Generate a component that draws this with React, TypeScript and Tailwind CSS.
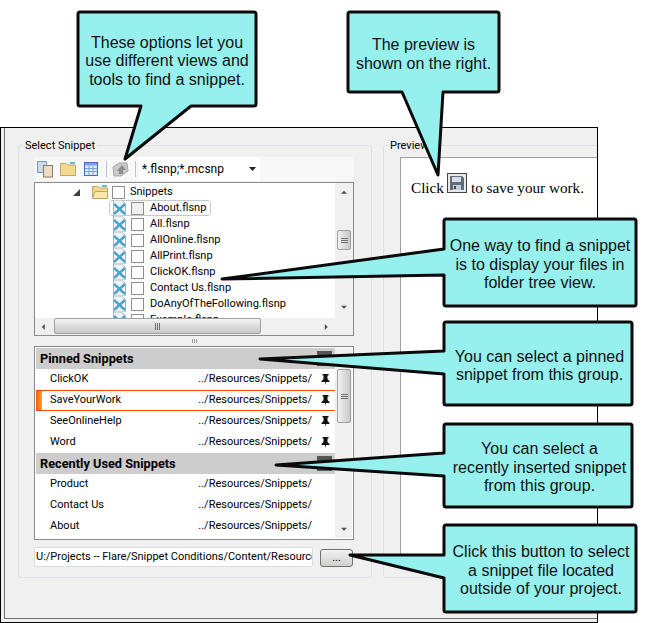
const uiFont = "font-['Roboto',sans-serif]";

const treeFiles = [
  "About.flsnp",
  "All.flsnp",
  "AllOnline.flsnp",
  "AllPrint.flsnp",
  "ClickOK.flsnp",
  "Contact Us.flsnp",
  "DoAnyOfTheFollowing.flsnp",
  "Example.flsnp",
];

const pinned = ["ClickOK", "SaveYourWork", "SeeOnlineHelp", "Word"];
const recent = ["Product", "Contact Us", "About"];

function CopyIcon() {
  return (
    <svg width="17" height="17" viewBox="0 0 17 17">
      <rect x="0.5" y="0.5" width="9" height="11" fill="#c9dbe8" stroke="#7f9bb0" />
      <rect x="6.5" y="4.5" width="9" height="11.5" fill="#ecdcc4" stroke="#8a7a66" />
    </svg>
  );
}

function FolderIcon({ open }: { open?: boolean }) {
  return (
    <svg width="16" height="14" viewBox="0 0 16 14">
      <path d="M0.5 3 V1.5 H6 L7.5 3 H15.5 V13.5 H0.5 Z" fill="#f3d88f" stroke="#c2a566" />
      {open && <path d="M0.5 13.5 L3 6.5 H15.5 V13.5 Z" fill="#fbe6ae" stroke="#c2a566" />}
      <rect x="10" y="0" width="5" height="2" fill="#5cc0c8" />
    </svg>
  );
}

function GridIcon() {
  return (
    <svg width="14" height="14" viewBox="0 0 14 14">
      <rect x="0.5" y="0.5" width="13" height="13" fill="#dfe8f8" stroke="#4a6cc0" />
      <rect x="1" y="1" width="12" height="2.5" fill="#7f9fe0" />
      <path d="M5 3.5 V13 M9 3.5 V13 M1 6.5 H13 M1 9.5 H13" stroke="#7f9fe0" />
    </svg>
  );
}

function DisabledIcon() {
  return (
    <svg width="17" height="15" viewBox="0 0 17 15">
      <path d="M1 5 L7 1 H15 L16 9 L9 14 H2 Z" fill="#c9c9c9" stroke="#a8a8a8" />
      <path d="M5 9 L10 3 L14 8 H11 V12 H7 V9 Z" fill="#8f8f8f" />
    </svg>
  );
}

function FileIcon() {
  return (
    <svg width="13" height="16" viewBox="0 0 13 16" className="shrink-0">
      <path d="M0.5 0 H8.5 L12.5 3.5 V16 H0.5 Z" fill="#eef4f6" stroke="#a9b8be" />
      <path d="M1 4 L12 14 M12 4 L1 14" stroke="#4aa3c8" strokeWidth="2.4" />
    </svg>
  );
}

function PinIcon() {
  return (
    <svg width="9" height="11" viewBox="0 0 9 11">
      <path d="M1.5 0 H7.5 V1.5 H6.5 V5 L8.5 7 V8 H5 L4.5 11 L4 8 H0.5 V7 L2.5 5 V1.5 H1.5 Z" fill="#111" />
    </svg>
  );
}

function Arrow({ dir }: { dir: "up" | "down" | "left" | "right" }) {
  const points = {
    up: "0,5 4,1 8,5",
    down: "0,1 8,1 4,5",
    left: "5,0 5,8 1,4",
    right: "1,0 1,8 5,4",
  }[dir];
  return (
    <svg width="8" height="8" viewBox="0 0 8 8" className={dir === "up" || dir === "down" ? "h-[6px]" : "w-[6px]"}>
      <polygon points={points} fill="#505050" />
    </svg>
  );
}

function VScrollbar({ thumbTop, thumbHeight, className }: { thumbTop: number; thumbHeight: number; className: string }) {
  return (
    <div className={"shrink-0 bg-[#f0f0f0] relative flex flex-col items-center justify-between " + className}>
      <Arrow dir="up" />
      <Arrow dir="down" />
      <div
        className="absolute left-[2px] w-[14px] rounded-[2px] border border-[#a0a0a0] bg-gradient-to-r from-[#f2f2f2] to-[#c8c8c8] flex flex-col items-center justify-center gap-[1px]"
        style={{ top: thumbTop, height: thumbHeight }}
      >
        <div className="w-[7px] h-px bg-[#707070]" />
        <div className="w-[7px] h-px bg-[#707070]" />
        <div className="w-[7px] h-px bg-[#707070]" />
      </div>
    </div>
  );
}

function GroupHeader({ label }: { label: string }) {
  return (
    <div className="h-[21px] bg-[#cdcdcd] flex items-center justify-between pl-[4px] pr-[3px] text-[12.75px] font-bold text-black">
      <span>{label}</span>
      <div className="w-[15px] h-[15px] bg-[#555]" />
    </div>
  );
}

function SnippetRow({ name, pin, selected }: { name: string; pin?: boolean; selected?: boolean }) {
  return (
    <div
      className={
        "h-[21px] flex items-center text-[11px] text-black relative " +
        (selected ? "border-y border-[#ff4a00]" : "")
      }
    >
      {selected && <div className="absolute left-0 top-0 bottom-0 w-[6px] bg-gradient-to-r from-[#ff5a00] to-[#ffa030]" />}
      <span className="pl-[14px] flex-1">{name}</span>
      <span>../Resources/Snippets/</span>
      <span className="w-[23px] flex justify-end pr-[5px]">{pin && <PinIcon />}</span>
    </div>
  );
}

function Callout({ className, lines }: { className: string; lines: string[] }) {
  return (
    <div className={"absolute pt-[5px] flex flex-col justify-center items-center text-center text-[16px] leading-[18.5px] text-[#111] font-['Liberation_Sans',sans-serif] " + className}>
      {lines.map((l) => (
        <span key={l} className="whitespace-nowrap">
          {l}
        </span>
      ))}
    </div>
  );
}

// callout shapes, box then tail, in page coordinates
const shapes = [
  "M80 12 H254 Q256 12 256 14 V104 Q256 106 254 106 H191 L125 159 L141 106 H80 Q78 106 78 104 V14 Q78 12 80 12 Z",
  "M350 12 H497 Q499 12 499 14 V90 Q499 92 497 92 H443 L438 175 L402 92 H350 Q348 92 348 90 V14 Q348 12 350 12 Z",
  "M446 219 H634 Q636 219 636 221 V304 Q636 306 634 306 H446 Q444 306 444 304 V275 L222 279 L444 249 V221 Q444 219 446 219 Z",
  "M446 322 H630 Q632 322 632 324 V403 Q632 405 630 405 H446 Q444 405 444 403 V374 L260 359 L444 351 V324 Q444 322 446 322 Z",
  "M446 424 H630 Q632 424 632 426 V505 Q632 507 630 507 H446 Q444 507 444 505 V476 L276 465 L444 453 V426 Q444 424 446 424 Z",
  "M446 525 H634 Q636 525 636 527 V610 Q636 612 634 612 H446 Q444 612 444 610 V578 L350 555 L444 555 V527 Q444 525 446 525 Z",
];

export default function App() {
  return (
    <div className={"relative w-[649px] h-[623px] bg-white overflow-hidden text-black " + uiFont}>
      <div className="pt-[127px]">
        <div className="w-[598px] h-[496px] border border-black bg-[#f0f0f0] overflow-hidden">
          <div className="h-[491px] ml-[3px] border-l border-b border-[#707070] pl-[13px] pt-[10px] flex gap-[11px]">
            <fieldset className="w-[354px] h-[440px] shrink-0 border border-[#d9e0e6] rounded-[3px]">
              <legend className="ml-[4px] px-[2px] text-[11px] leading-[15px]">Select Snippet</legend>
              <div className="pl-[15px] pr-[17px] pt-[4px]">
                <div className="h-[24px] bg-[#f8f8f8] flex items-center pl-[3px]">
                  <CopyIcon />
                  <div className="ml-[6px]">
                    <FolderIcon />
                  </div>
                  <div className="ml-[8px]">
                    <GridIcon />
                  </div>
                  <div className="ml-[8px] w-px h-[16px] bg-[#c0c0c0]" />
                  <div className="ml-[5px]">
                    <DisabledIcon />
                  </div>
                  <div className="ml-[6px] w-px h-[16px] bg-[#c0c0c0]" />
                  <div className="ml-[3px] w-[121px] h-[24px] bg-white flex items-center justify-between pl-[3px] pr-[4px] text-[12px]">
                    <span>*.flsnp;*.mcsnp</span>
                    <svg width="7" height="4" viewBox="0 0 7 4">
                      <polygon points="0,0 7,0 3.5,4" fill="#222" />
                    </svg>
                  </div>
                </div>
                <div className="mt-px h-[154px] border border-[#8a8a8a] bg-white flex flex-col">
                  <div className="h-[135px] flex">
                    <div className="flex-1 overflow-hidden text-[11px]">
                      <div className="h-[17px] pt-px flex items-center pl-[38px]">
                        <svg width="7" height="7" viewBox="0 0 7 7">
                          <polygon points="7,0 7,7 0,7" fill="#404040" />
                        </svg>
                        <div className="ml-[12px]">
                          <FolderIcon open />
                        </div>
                        <div className="ml-[4px] w-[13px] h-[13px] border border-[#8e8e8e] bg-white" />
                        <span className="ml-[5px]">Snippets</span>
                      </div>
                      {treeFiles.map((file, i) => (
                        <div key={file} className="h-[16px] flex items-center pl-[74px]">
                          <div
                            className={
                              "h-[16px] flex items-center pl-[3px] pr-[4px] rounded-[3px] border " +
                              (i === 0 ? "border-[#c8c8c8]" : "border-transparent")
                            }
                          >
                            <FileIcon />
                            <div
                              className={
                                "ml-[5px] w-[13px] h-[13px] border border-[#8e8e8e] " +
                                (i === 0 ? "bg-[#f0f0f0]" : "bg-white")
                              }
                            />
                            <span className="ml-[6px] whitespace-nowrap">{file}</span>
                          </div>
                        </div>
                      ))}
                    </div>
                    <VScrollbar className="w-[18px] py-[7px]" thumbTop={47} thumbHeight={20} />
                  </div>
                  <div className="h-[17px] bg-[#f0f0f0] flex items-center justify-between pl-[6px] pr-[23px] relative">
                    <Arrow dir="left" />
                    <Arrow dir="right" />
                    <div className="absolute left-[19px] top-0 h-[16px] w-[207px] rounded-[2px] border border-[#a0a0a0] bg-gradient-to-b from-[#f4f4f4] to-[#c8c8c8] flex items-center justify-center gap-[1px]">
                      <div className="w-px h-[7px] bg-[#707070]" />
                      <div className="w-px h-[7px] bg-[#707070]" />
                      <div className="w-px h-[7px] bg-[#707070]" />
                    </div>
                  </div>
                </div>
                <div className="h-[10px] flex items-center justify-center gap-px">
                  <div className="w-px h-[4px] bg-[#a0a0a0]" />
                  <div className="w-px h-[4px] bg-[#a0a0a0]" />
                  <div className="w-px h-[4px] bg-[#a0a0a0]" />
                </div>
                <div className="h-[194px] border border-[#8a8a8a] bg-white p-px flex">
                  <div className="flex-1 overflow-hidden">
                    <GroupHeader label="Pinned Snippets" />
                    {pinned.map((p) => (
                      <SnippetRow key={p} name={p} pin selected={p === "SaveYourWork"} />
                    ))}
                    <GroupHeader label="Recently Used Snippets" />
                    {recent.map((r) => (
                      <SnippetRow key={r} name={r} />
                    ))}
                  </div>
                  <VScrollbar className="w-[17px] pt-[10px] pb-[5px]" thumbTop={21} thumbHeight={54} />
                </div>
                <div className="mt-[7px] flex items-end gap-[7px]">
                  <div className="w-[279px] h-[20px] bg-white border border-[#dcdcdc] rounded-[2px] pl-px overflow-hidden whitespace-nowrap text-[11px] leading-[18px]">
                    U:/Projects -- Flare/Snippet Conditions/Content/Resource
                  </div>
                  <button className="w-[33px] h-[18px] rounded-[3px] border border-[#707070] bg-gradient-to-b from-[#f2f2f2] to-[#cfcfcf] text-[11px] leading-[16px]">
                    ...
                  </button>
                </div>
              </div>
            </fieldset>
            <fieldset className="w-[300px] h-[440px] shrink-0 border border-[#d9e0e6] rounded-[3px]">
              <legend className="ml-[4px] px-[2px] text-[11px] leading-[15px]">Preview</legend>
              <div className="pl-[16px] pt-[4px]">
                <div className="h-[403px] bg-white border-l border-t border-[#a0a0a0] pl-[10px] pt-[15px] flex items-start font-['Liberation_Serif',serif] text-[15.2px] text-black">
                  <span className="mt-[4px]">Click</span>
                  <div className="ml-[3px] w-[20px] h-[20px] border border-[#444] bg-[#e8e8e8] flex items-center justify-center shrink-0">
                    <svg width="16" height="16" viewBox="0 0 16 16">
                      <path d="M1 1 H13 L15 3 V15 H1 Z" fill="#5f6e7c" />
                      <rect x="3" y="2" width="9" height="5" fill="#d5dee6" />
                      <rect x="4" y="10" width="8" height="5" fill="#c4ccd4" />
                      <rect x="5" y="11" width="2" height="3" fill="#444" />
                    </svg>
                  </div>
                  <span className="ml-[4px] mt-[4px] whitespace-nowrap">to save your work.</span>
                </div>
              </div>
            </fieldset>
          </div>
        </div>
      </div>
      <svg className="absolute inset-0" width="649" height="623" viewBox="0 0 649 623">
        {shapes.map((d) => (
          <path key={d} d={d} fill="#96f0ed" stroke="#0a0a0a" strokeWidth="3" strokeLinejoin="round" />
        ))}
      </svg>
      <Callout className="left-[78px] top-[12px] w-[178px] h-[94px]" lines={["These options let you", "use different views and", "tools to find a snippet."]} />
      <Callout className="left-[348px] top-[12px] w-[151px] h-[80px]" lines={["The preview is", "shown on the right."]} />
      <Callout className="left-[444px] top-[219px] w-[192px] h-[87px]" lines={["One way to find a snippet", "is to display your files in", "folder tree view."]} />
      <Callout className="left-[444px] top-[322px] w-[191px] h-[83px]" lines={["You can select a pinned", "snippet from this group."]} />
      <Callout className="left-[444px] top-[424px] w-[191px] h-[83px]" lines={["You can select a", "recently inserted snippet", "from this group."]} />
      <Callout className="left-[444px] top-[525px] w-[194px] h-[87px]" lines={["Click this button to select", "a snippet file located", "outside of your project."]} />
    </div>
  );
}
